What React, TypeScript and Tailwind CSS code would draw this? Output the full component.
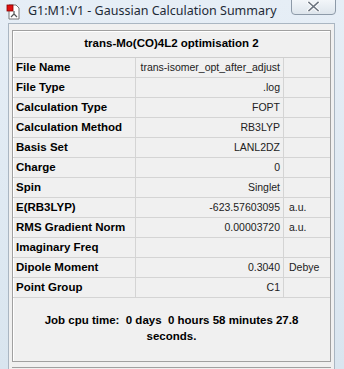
import React from "react";

const rows: [string, string, string][] = [
  ["File Name", "trans-isomer_opt_after_adjust", ""],
  ["File Type", ".log", ""],
  ["Calculation Type", "FOPT", ""],
  ["Calculation Method", "RB3LYP", ""],
  ["Basis Set", "LANL2DZ", ""],
  ["Charge", "0", ""],
  ["Spin", "Singlet", ""],
  ["E(RB3LYP)", "-623.57603095", "a.u."],
  ["RMS Gradient Norm", "0.00003720", "a.u."],
  ["Imaginary Freq", "", ""],
  ["Dipole Moment", "0.3040", "Debye"],
  ["Point Group", "C1", ""],
];

function AppIcon() {
  return (
    <svg width="16" height="16" viewBox="0 0 16 16">
      <path d="M3 1h7l3 3v11H3z" fill="#fff" stroke="#777" strokeWidth="1" />
      <rect x="1" y="1" width="6" height="6" fill="#e01010" stroke="#800" strokeWidth="0.8" />
      <path d="M8 7v3M8 10l-3 3M8 10l3 3" stroke="#555" strokeWidth="1.2" fill="none" />
    </svg>
  );
}

export default function App() {
  return (
    <div
      className="relative w-[344px] h-[369px] overflow-hidden bg-gradient-to-b from-[#e6eef6] to-[#d9e5ef] text-black"
      style={{ fontFamily: '"Liberation Sans", Arial, sans-serif' }}
    >
      {/* title bar */}
      <div className="flex items-center h-[23px] pl-[6px] gap-[6px]">
        <AppIcon />
        <span className="text-[12.5px] text-[#1e2a36] leading-none" style={{ fontFamily: '"Noto Sans", "Liberation Sans", sans-serif' }}>
          G1:M1:V1 - Gaussian Calculation Summary
        </span>
      </div>
      {/* close button */}
      <div className="absolute top-[-2px] left-[291px] w-[45px] h-[17px] rounded-b-[4px] border border-[#8d9aa8] bg-gradient-to-b from-[#f4f7fa] to-[#dde5ec] flex items-center justify-center">
        <svg width="13" height="11" viewBox="0 0 13 11">
          <path d="M2 1.5l9 8M11 1.5l-9 8" stroke="#fff" strokeWidth="3.4" strokeLinecap="square" />
          <path d="M2 1.5l9 8M11 1.5l-9 8" stroke="#6c7580" strokeWidth="1.6" strokeLinecap="square" />
        </svg>
      </div>

      {/* client area */}
      <div className="ml-[8px] mr-[9px] h-[346px] border-l border-t border-r border-[#aab6c2] bg-[#f0f0f0] pt-[6px] px-[3px]">
        <div className="border border-[#a0a0a0] bg-[#f0f0f0] shadow-[inset_1px_1px_0_#ffffff]">
          <div className="h-[27px] flex items-center justify-center font-bold text-[11.5px] border-b border-[#cfcfcf]">
            trans-Mo(CO)4L2 optimisation 2
          </div>
          {rows.map(([k, v, u]) => (
            <div key={k} className="grid grid-cols-[123px_148px_46px] h-[20px] border-b border-[#d4d4d4]">
              <div className="flex items-center pl-[3px] font-bold text-[11.5px] whitespace-nowrap border-r border-[#d4d4d4]">{k}</div>
              <div className="flex items-center justify-end pr-[3px] border-r border-[#d4d4d4] text-[#222] text-[10.5px] whitespace-nowrap">{v}</div>
              <div className="flex items-center pl-[5px] text-[#222] text-[10.5px] whitespace-nowrap">{u}</div>
            </div>
          ))}
          <div className="h-[63px] flex flex-col items-center pt-[14px] font-bold text-[11.5px] leading-[16px]">
            <div>Job cpu time:&nbsp; 0 days&nbsp; 0 hours 58 minutes 27.8</div>
            <div>seconds.</div>
          </div>
        </div>
        <div className="mt-[5px] border-t border-[#a0a0a0] h-[1px] bg-white" />
      </div>
    </div>
  );
}
